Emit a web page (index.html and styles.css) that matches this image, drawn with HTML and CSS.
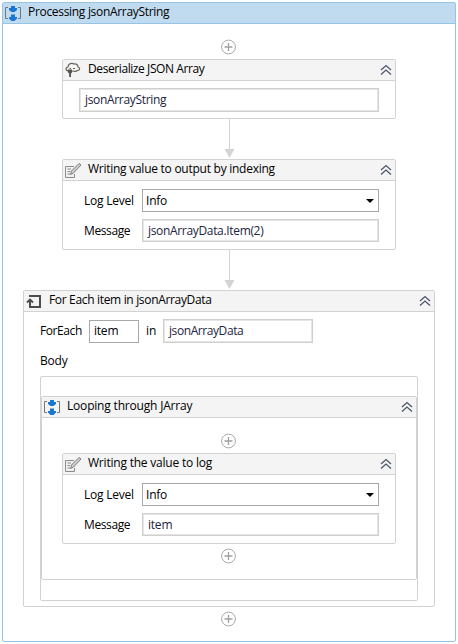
FILE: index.html
```html
<!DOCTYPE html>
<html lang="en">
<head>
<meta charset="utf-8">
<title>Processing jsonArrayString</title>
<link rel="stylesheet" href="styles.css">
</head>
<body>
<svg width="0" height="0" class="defs">
  <symbol id="seq" viewBox="0 0 18 18"><path d="M4 3.500H1.500V14.500H4M14 3.500H16.500V14.500H14" fill="none" stroke="#70767b"/><path d="M7 2h4v2h2v2l-2.500 2h-3L5 6V4h2zM7 10.500h4V13h2v1.500L10.500 17h-3L5 14.500V13h2z" fill="#1976d2"/></symbol>
  <symbol id="cloud" viewBox="0 0 18 18"><path d="M5 10C1.500 10 1 6.500 4 6C4 2.500 8 1.500 10 3C13 2.500 14 4.500 14 6C16.500 6.500 16 9.500 13.500 9.500C12 11 10 10.500 8 10M5.500 7.500H7M9 7.500H11" fill="none" stroke="#66635a" stroke-width="1.200"/><path d="M4 8.500h4v3l-1 1v3.500H5.200v-3.500L4 11.500z" fill="#55534a"/></symbol>
  <symbol id="log" viewBox="0 0 18 18"><path d="M10 5.500H1.500V16.500H10.500V13M3.500 8H7M3.500 10.500H6M3.500 13H6" fill="#f0f0f0" stroke="#8b8b8b"/><path d="M6.500 13.500l1-3.500L15 2.500l2 1.500-7.500 8z" fill="#cfcfcf" stroke="#7d7d7d"/></symbol>
  <symbol id="loop" viewBox="0 0 18 18"><path d="M4 4H15V15H5V8" fill="none" stroke="#4c4c4c" stroke-width="2"/><path d="M2 10.500L5 7.500L8 10.500" fill="none" stroke="#4c4c4c" stroke-width="1.800"/></symbol>
  <symbol id="up" viewBox="0 0 12 12"><path d="M1 6L6 1.500L11 6M1 10.500L6 6L11 10.500" fill="none" stroke="#4c566b" stroke-width="1.300"/></symbol>
  <symbol id="plus" viewBox="0 0 16 16"><circle cx="7.500" cy="8" r="6.900" fill="#fff" stroke="#a9a9a9"/><path d="M3.500 8H11.500M7.500 4V12" stroke="#a0a0a0" stroke-width="1.300"/></symbol>
  <symbol id="arrow" viewBox="0 0 11 40"><path d="M5.500 0V31" stroke="#d4d4d4"/><path d="M.5 30H10.500L5.500 39z" fill="#d4d4d4"/></symbol>
</svg>
<main class="box root">
  <header class="head"><svg class="ic"><use href="#seq"/></svg><h1 class="t1">Processing jsonArrayString</h1></header>
  <svg class="plus first"><use href="#plus"/></svg>
  <section class="box card short">
    <header class="head"><svg class="ic"><use href="#cloud"/></svg><h2 class="t2">Deserialize JSON Array</h2><svg class="up"><use href="#up"/></svg></header>
    <div class="field solo"><span class="v1">jsonArrayString</span></div>
  </section>
  <svg class="arrow"><use href="#arrow"/></svg>
  <section class="box card">
    <header class="head"><svg class="ic"><use href="#log"/></svg><h2 class="t3">Writing value to output by indexing</h2><svg class="up"><use href="#up"/></svg></header>
    <div class="form">
      <label><span class="ll">Log Level</span></label><div class="combo"><span class="info">Info</span><i class="caret"></i></div>
      <label><span class="lm">Message</span></label><div class="field"><span class="v2">jsonArrayData.Item(2)</span></div>
    </div>
  </section>
  <svg class="arrow"><use href="#arrow"/></svg>
  <section class="box each">
    <header class="head"><svg class="ic"><use href="#loop"/></svg><h2 class="t4">For Each item in jsonArrayData</h2><svg class="up"><use href="#up"/></svg></header>
    <div class="row"><span class="fe">ForEach</span><div class="name"><span class="it">item</span></div><span class="in">in</span><div class="field"><span class="v3">jsonArrayData</span></div></div>
    <div class="bodylabel"><span class="bd">Body</span></div>
    <div class="body">
      <section class="box seq">
        <header class="head"><svg class="ic"><use href="#seq"/></svg><h3 class="t5">Looping through JArray</h3><svg class="up"><use href="#up"/></svg></header>
        <svg class="plus second"><use href="#plus"/></svg>
        <section class="box card">
          <header class="head"><svg class="ic"><use href="#log"/></svg><h4 class="t6">Writing the value to log</h4><svg class="up"><use href="#up"/></svg></header>
          <div class="form">
            <label><span class="ll">Log Level</span></label><div class="combo"><span class="info">Info</span><i class="caret"></i></div>
            <label><span class="lm">Message</span></label><div class="field"><span class="it">item</span></div>
          </div>
        </section>
        <svg class="plus third"><use href="#plus"/></svg>
      </section>
    </div>
  </section>
  <svg class="plus last"><use href="#plus"/></svg>
</main>
</body>
</html>
```
FILE: styles.css
```css
* { box-sizing: border-box; }
body { margin: 0; padding: 2px; background: #fff; font: 12px/16px "Open Sans", "Noto Sans", sans-serif; color: #000; }
.defs { display: none; }
svg { display: block; flex: none; }
h1, h2, h3, h4 { margin: 0 auto 0 6px; font-size: 12px; font-weight: 400; white-space: nowrap; transform: translateY(-1px); }
span { white-space: nowrap; }
.box { display: flex; flex-direction: column; align-items: center; border: 1px solid #d2d2d2; border-radius: 2px; background: #fff; }
.head { display: flex; align-items: center; align-self: stretch; flex: none; height: 21px; border-bottom: 1px solid #d2d2d2; background: #f4f4f4; }
.ic { width: 18px; height: 18px; margin-left: 1px; }
.up { width: 12px; height: 12px; margin-right: 3px; }
.plus { width: 16px; height: 16px; }

.t1 { letter-spacing: -.31px; }
.t2 { letter-spacing: -.41px; }
.t3 { letter-spacing: -.26px; }
.t4 { letter-spacing: -.33px; }
.t5 { letter-spacing: -.19px; }
.t6 { letter-spacing: -.21px; }
.v1, .v2 { letter-spacing: -.33px; }
.v3 { letter-spacing: -.42px; }
.v1, .v3 { margin-left: 1px; }
.ll, .info, .it, .bd { letter-spacing: -.22px; }
.lm { letter-spacing: -.38px; }

.root { width: 454px; height: 640px; border-color: #95c4e4; }
.root > .head { background: #c0dbef; border-color: #95c4e4; }
.first { margin: 15px 0 4px; }
.card { width: 334px; height: 91px; }
.short { height: 60px; }
.arrow { width: 11px; height: 40px; margin-left: 1px; }
.field { display: flex; align-items: center; width: 237px; height: 24px; padding: 0 4px; border: 1px solid #cfcfcf; box-shadow: inset 0 0 0 1px #e6e6e6; color: #1d2440; }
.solo { width: 300px; margin-top: 7px; }
.form { display: grid; grid-template-columns: 58px 237px; grid-auto-rows: 23px; row-gap: 7px; align-items: center; align-self: stretch; margin: 8px 0 0 21px; }
.form .field { height: 23px; padding-left: 5px; }
.combo { display: flex; align-items: center; justify-content: space-between; height: 23px; padding: 0 4px 0 3px; border: 1px solid #a8a8a8; }
.caret { width: 0; height: 0; border: 4px solid transparent; border-top-color: #000; border-bottom: 0; }

.each { width: 412px; height: 317px; }
.root > .each { align-self: flex-start; margin-left: 20px; }
.row { display: flex; align-items: center; align-self: stretch; height: 24px; margin: 7px 0 0 16px; }
.fe { width: 49px; letter-spacing: -.42px; }
.name { display: flex; align-items: center; width: 50px; height: 23px; padding-left: 4px; border: 1px solid #a8a8a8; }
.in { width: 24px; padding-left: 7px; }
.row .field { width: 150px; }
.bodylabel { align-self: stretch; margin: 10px 0 7px 16px; height: 16px; }
.body { width: 378px; height: 225px; align-self: flex-start; margin-left: 16px; padding-top: 19px; border: 1px solid #d2d2d2; border-radius: 2px; }
.seq { width: 376px; height: 184px; }
.second { margin: 15px 0 4px; }
.third, .last { margin-top: 4px; }
```
